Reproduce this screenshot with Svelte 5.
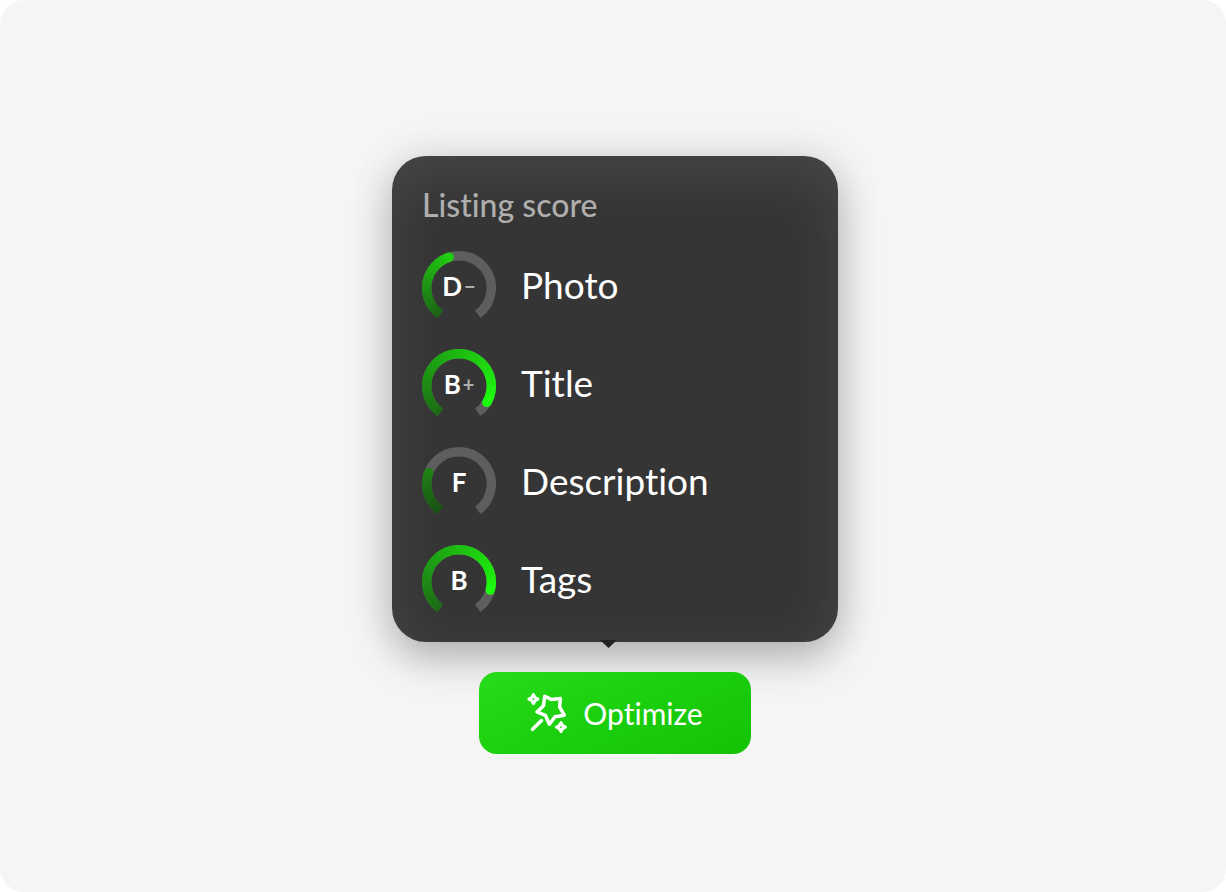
<script lang="ts">
  type Color = [number, number, number];
  type Score = { label: string; grade: string; sign: string; sweep: number; from: Color; to: Color };

  const scores: Score[] = [
    { label: "Photo", grade: "D", sign: "−", sweep: 127, from: [28, 100, 22], to: [32, 205, 16] },
    { label: "Title", grade: "B", sign: "+", sweep: 265, from: [29, 108, 22], to: [30, 255, 14] },
    { label: "Description", grade: "F", sign: "", sweep: 75, from: [27, 82, 21], to: [31, 128, 22] },
    { label: "Tags", grade: "B", sign: "", sweep: 249, from: [29, 108, 22], to: [30, 250, 14] },
  ];

  const center = 37;
  const radius = 32.3;
  const start = -144.5;
  const full = 289;
  const step = 4;

  function point(angle: number) {
    const rad = (angle * Math.PI) / 180;
    return { x: center + radius * Math.sin(rad), y: center - radius * Math.cos(rad) };
  }

  function arc(from: number, to: number) {
    const a = point(start + from);
    const b = point(start + to);
    return `M${a.x} ${a.y}A${radius} ${radius} 0 ${to - from > 180 ? 1 : 0} 1 ${b.x} ${b.y}`;
  }

  function mix(s: Score, t: number) {
    return `rgb(${s.from.map((c, i) => Math.round(c + (s.to[i] - c) * t)).join(",")})`;
  }

  // short overlapping arcs, so the colour follows the ring
  function segments(s: Score) {
    const list = [];
    for (let a = 0; a < s.sweep; a += step) {
      list.push({ d: arc(a, Math.min(a + step + 1, s.sweep)), color: mix(s, a / s.sweep) });
    }
    return list;
  }
</script>

<main class="stage">
  <section class="card">
    <h2>Listing score</h2>
    <ul>
      {#each scores as s (s.label)}
        {@const end = point(start + s.sweep)}
        <li>
          <div class="gauge">
            <svg viewBox="0 0 74 74" aria-hidden="true">
              <path class="track" d={arc(0, full)} />
              {#each segments(s) as seg}
                <path class="value" d={seg.d} stroke={seg.color} />
              {/each}
              <circle cx={end.x} cy={end.y} r="4.7" fill={mix(s, 1)} />
            </svg>
            <span class="grade">{s.grade}{#if s.sign}<span class="sign">{s.sign}</span>{/if}</span>
          </div>
          <span class="label">{s.label}</span>
        </li>
      {/each}
    </ul>
    <span class="arrow"></span>
  </section>

  <button type="button">
    <svg class="wand" viewBox="0 0 40 40" aria-hidden="true">
      <path d="M17.7 3.2L24.7 6.6L33.3 5.6L32.6 14L37.3 22.2L28 23.8L22.4 31.2L18.4 22.4L10 19L16.5 12.7Z" />
      <path d="M14.5 27.5L5.5 36.3" />
      <path class="spark" d="M6.4 1.7L8 4.5L10.8 6.1L8 7.7L6.4 10.5L4.8 7.7L2 6.1L4.8 4.5Z" />
      <path class="spark" d="M34 29.7L35.6 32.5L38.4 34.1L35.6 35.7L34 38.5L32.4 35.7L29.6 34.1L32.4 32.5Z" />
    </svg>
    Optimize
  </button>
</main>

<style>
  :global(body) {
    background: #fff;
  }
  .stage {
    box-sizing: border-box;
    min-height: 100vh;
    padding: 18px 0 0 4px;
    display: flex;
    flex-direction: column;
    align-items: center;
    justify-content: center;
    gap: 30px;
    border-radius: 24px;
    background: #f5f5f5;
    font-family: Lato, "Open Sans", sans-serif;
    font-variant-ligatures: none;
    color: #fff;
  }

  .card {
    position: relative;
    box-sizing: border-box;
    width: 446px;
    max-width: 100%;
    padding: 30px 30px 23px;
    border-radius: 34px;
    background: #353535;
    box-shadow:
      inset 0 18px 56px rgba(255, 255, 255, 0.09),
      0 16px 40px rgba(0, 0, 0, 0.26),
      0 0 48px rgba(0, 0, 0, 0.08);
  }
  h2 {
    margin: 0 0 28px;
    font-size: 32px;
    font-weight: 500;
    line-height: 37px;
    color: #aeaeae;
  }
  ul {
    display: flex;
    flex-direction: column;
    gap: 24px;
    margin: 0;
    padding: 0;
    list-style: none;
  }
  li {
    display: flex;
    align-items: center;
    gap: 25px;
  }

  .gauge {
    display: grid;
    place-items: center;
    width: 74px;
    height: 74px;
  }
  .gauge svg,
  .grade {
    grid-area: 1 / 1;
  }
  .gauge svg {
    width: 74px;
    height: 74px;
  }
  .track,
  .value {
    fill: none;
    stroke-width: 9.4;
  }
  .track { stroke: #5e5e5e; }

  .grade {
    display: flex;
    align-items: center;
    gap: 2px;
    padding-bottom: 4px;
    font-size: 26px;
    font-weight: 700;
    line-height: 32px;
  }
  .sign {
    font-size: 20px;
    color: #aeaeae;
  }
  .label {
    padding-bottom: 6px;
    font-size: 37px;
    line-height: 44px;
  }

  .arrow {
    position: absolute;
    top: calc(100% - 2px);
    left: 208px;
    width: 17px;
    height: 8px;
    background: #222;
    clip-path: polygon(0 0, 100% 0, 50% 100%);
  }

  button {
    position: relative;
    display: flex;
    align-items: center;
    justify-content: center;
    gap: 16px;
    height: 82px;
    padding: 0 48px;
    border: 0;
    border-radius: 18px;
    background: linear-gradient(155deg, #26d919 5%, #1bcf0e 50%, #15c205 100%);
    color: inherit;
    font: inherit;
    font-size: 30px;
    cursor: pointer;
  }
  .wand {
    width: 40px;
    height: 40px;
    fill: none;
    stroke: #fff;
    stroke-width: 3.5;
    stroke-linecap: round;
    stroke-linejoin: round;
  }
  .spark { stroke-width: 3.1; }
</style>
